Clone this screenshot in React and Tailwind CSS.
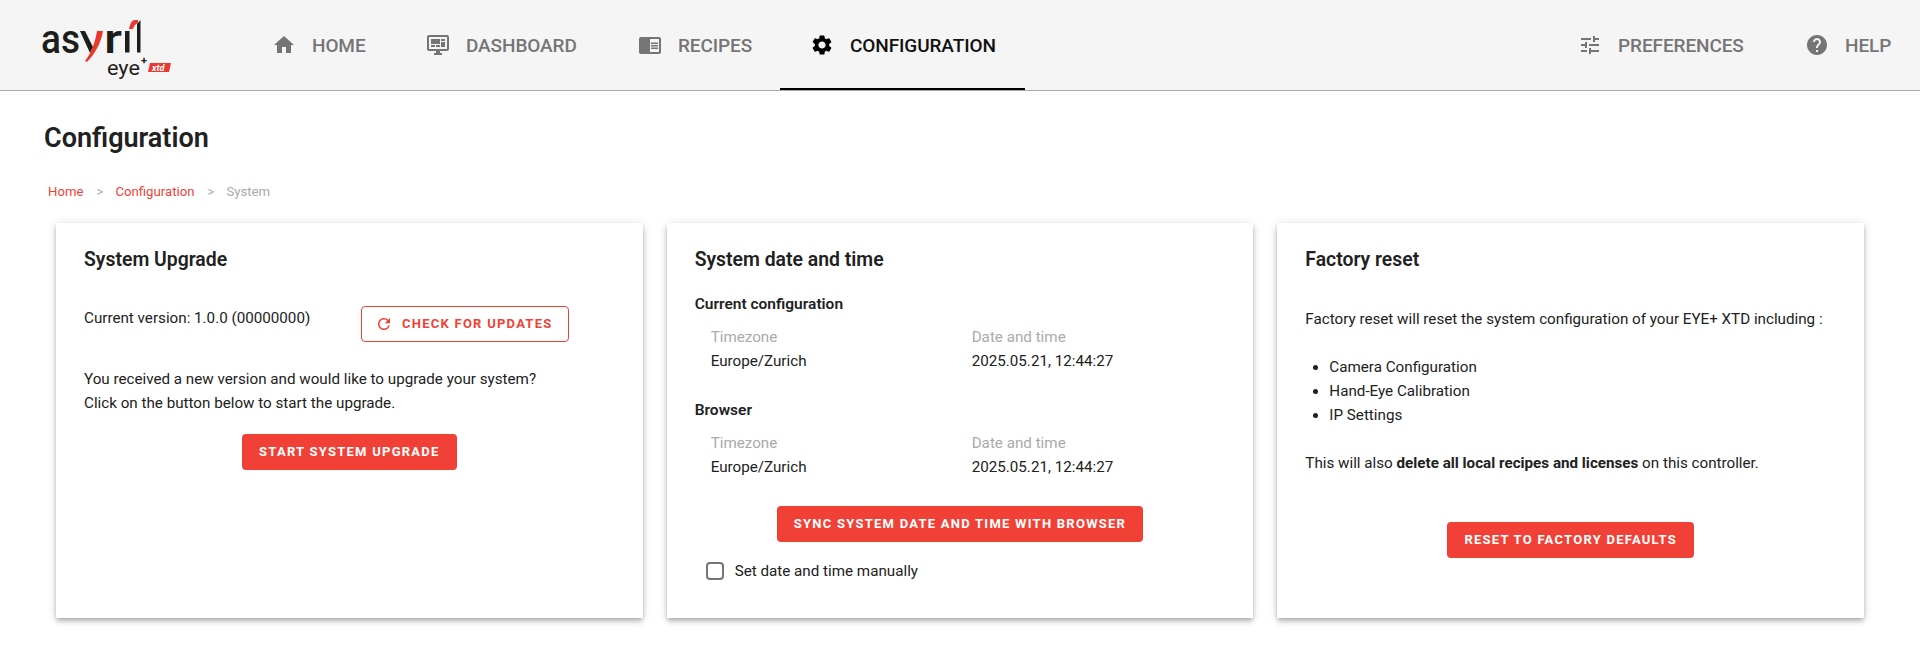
import { MdHome, MdChromeReaderMode, MdSettings, MdTune, MdHelp, MdRefresh } from 'react-icons/md';

const FONT = "font-['Roboto',sans-serif]";

function Logo() {
  return (
    <svg width="145" height="70" viewBox="0 0 145 70" className="ml-[35px] mt-[15px] shrink-0">
      <text x="6" y="37.5" fontFamily="Roboto, sans-serif" fontSize="41" fontWeight="500" fill="#1d1d1b" textLength="39" lengthAdjust="spacingAndGlyphs">as</text>
      <path d="M45 16 L50 16 L58 32 L55 38 Z" fill="#1d1d1b" />
      <path d="M62 16 L68 16 C66 28 60 39 52 47 L50 46 C56 38 60 28 62 16 Z" fill="#e8392f" />
      <text x="69" y="37.5" fontFamily="Roboto, sans-serif" fontSize="41" fontWeight="500" fill="#1d1d1b" textLength="18" lengthAdjust="spacingAndGlyphs">r</text>
      <rect x="90" y="16" width="4.5" height="21.5" fill="#1d1d1b" />
      <path d="M94 14 L98 14 C99 11 100 9 103 8 L103 5 L99 5 C96 6 95 10 94 14 Z" fill="#e8392f" />
      <path d="M103 8 L105.5 5 V37.5 H102 V9 Z" fill="#1d1d1b" />
      <text x="72" y="60" fontFamily="Roboto, sans-serif" fontSize="20" fill="#1d1d1b" textLength="33" lengthAdjust="spacingAndGlyphs">eye</text>
      <text x="106" y="49" fontFamily="Roboto, sans-serif" fontSize="11" fontWeight="700" fill="#1d1d1b">+</text>
      <path d="M115 48 H136 L134 57 H113 Z" fill="#e8392f" />
      <text x="117" y="55.5" fontFamily="Roboto, sans-serif" fontSize="9" fontStyle="italic" fontWeight="700" fill="#fff">xtd</text>
    </svg>
  );
}

function DashboardIcon({ className }) {
  return (
    <svg viewBox="0 0 24 24" fill="currentColor" className={className}>
      <path d="M21,16V4H3V16H21M21,2A2,2 0 0,1 23,4V16A2,2 0 0,1 21,18H14V20H16V22H8V20H10V18H3C1.89,18 1,17.1 1,16V4C1,2.89 1.89,2 3,2H21M5,6H14V11H5V6M15,6H19V8H15V6M19,9V14H15V9H19M5,12H9V14H5V12M10,12H14V14H10V12Z" />
    </svg>
  );
}

function Tab({ icon: Icon, label, width, active }) {
  return (
    <div className={`${width} h-full flex items-center gap-4 text-[19px] font-medium tracking-[-0.1px] relative ${active ? 'pl-[30px] text-[#111]' : 'pl-8 text-[#757575]'}`}>
      <Icon className={`w-6 h-6 shrink-0 ${active ? 'text-black' : 'text-[#757575]'}`} />
      <span className="mt-0.5">{label}</span>
      {active && <div className="absolute left-0 right-0 bottom-0 h-0.5 bg-black" />}
    </div>
  );
}

function Card({ title, children }) {
  return (
    <div className="bg-white px-7 pt-[23px] shadow-[0_2px_4px_-1px_rgba(0,0,0,0.2),0_4px_5px_0_rgba(0,0,0,0.14),0_1px_10px_0_rgba(0,0,0,0.12)]">
      <h2 className="text-[19.4px] leading-7 font-semibold text-[#212121]">{title}</h2>
      {children}
    </div>
  );
}

function RedButton({ label }) {
  return (
    <button className="h-9 px-[17px] bg-[#f14137] text-white rounded text-[13px] font-bold tracking-[1.25px] whitespace-nowrap">
      {label}
    </button>
  );
}

function TimeInfo({ heading }) {
  return (
    <div>
      <h3 className="text-[15.5px] leading-6 font-semibold text-[#212121]">{heading}</h3>
      <div className="grid grid-cols-[261px_1fr] pl-4 mt-[9px] leading-6">
        <span className="text-[#aaaaaa]">Timezone</span>
        <span className="text-[#aaaaaa]">Date and time</span>
        <span>Europe/Zurich</span>
        <span>2025.05.21, 12:44:27</span>
      </div>
    </div>
  );
}

export default function App() {
  return (
    <div className={`w-[1920px] h-[645px] overflow-hidden bg-white text-[#212121] text-[15.2px] ${FONT}`}>
      <header className="h-[91px] bg-[#f5f5f5] border-b border-[#aaaaaa] flex">
        <div className="w-[240px] shrink-0">
          <Logo />
        </div>
        <Tab icon={MdHome} label="HOME" width="w-[154px]" />
        <Tab icon={DashboardIcon} label="DASHBOARD" width="w-[212px]" />
        <Tab icon={MdChromeReaderMode} label="RECIPES" width="w-[174px]" />
        <Tab icon={MdSettings} label="CONFIGURATION" width="w-[245px]" active />
        <div className="flex-1" />
        <Tab icon={MdTune} label="PREFERENCES" width="w-[227px]" />
        <Tab icon={MdHelp} label="HELP" width="w-[147px]" />
      </header>

      <h1 className="ml-[44px] mt-[29px] text-[27px] leading-9 font-semibold">Configuration</h1>

      <nav className="ml-[48px] mt-[26px] flex items-center text-[13.2px] leading-5 text-[#f14137]">
        <span>Home</span>
        <span className="ml-[13px] mr-3 text-[#aaaaaa]">&gt;</span>
        <span>Configuration</span>
        <span className="ml-[13px] mr-3 text-[#aaaaaa]">&gt;</span>
        <span className="text-[#aaaaaa]">System</span>
      </nav>

      <main className="mt-[21px] px-14 grid grid-cols-3 gap-6 h-[395px]">
        <Card title="System Upgrade">
          <div className="flex mt-8">
            <p className="w-[277px] leading-6">Current version: 1.0.0 (00000000)</p>
            <button className="h-9 w-[208px] flex items-center pl-[13px] border border-[#f14137] rounded text-[#f14137] text-[13px] font-bold tracking-[1.25px]">
              <MdRefresh className="w-[18px] h-[18px] mr-[9px]" />
              CHECK FOR UPDATES
            </button>
          </div>
          <p className="mt-[25px] leading-6">
            You received a new version and would like to upgrade your system?
            <br />
            Click on the button below to start the upgrade.
          </p>
          <div className="flex justify-center mt-[19px]">
            <RedButton label="START SYSTEM UPGRADE" />
          </div>
        </Card>

        <Card title="System date and time">
          <div className="mt-[18px] flex flex-col gap-[25px]">
            <TimeInfo heading="Current configuration" />
            <TimeInfo heading="Browser" />
          </div>
          <div className="flex justify-center mt-[27px]">
            <RedButton label="SYNC SYSTEM DATE AND TIME WITH BROWSER" />
          </div>
          <label className="flex items-center mt-[17px] ml-[11px] leading-6">
            <span className="w-[18px] h-[18px] border-2 border-[#757575] rounded-sm mr-[11px]" />
            Set date and time manually
          </label>
        </Card>

        <Card title="Factory reset">
          <p className="mt-[33px] leading-6">Factory reset will reset the system configuration of your EYE+ XTD including :</p>
          <ul className="mt-6 list-disc pl-6 leading-6">
            <li>Camera Configuration</li>
            <li>Hand-Eye Calibration</li>
            <li>IP Settings</li>
          </ul>
          <p className="mt-6 leading-6">
            This will also <b className="font-bold">delete all local recipes and licenses</b> on this controller.
          </p>
          <div className="flex justify-center mt-[47px]">
            <RedButton label="RESET TO FACTORY DEFAULTS" />
          </div>
        </Card>
      </main>
    </div>
  );
}
